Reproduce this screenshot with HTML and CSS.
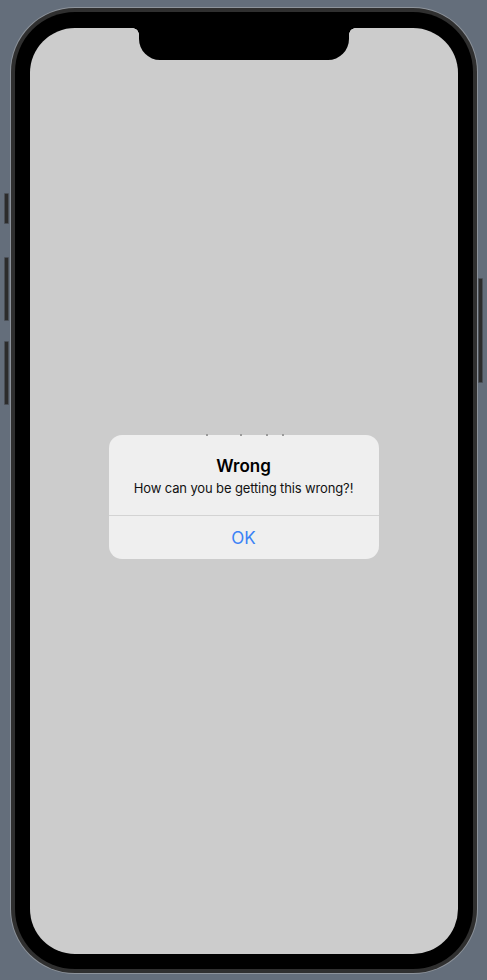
FILE: index.html
```html
<!DOCTYPE html>
<html lang="en">
<head>
<meta charset="utf-8">
<title>Alert</title>
<link rel="stylesheet" href="styles.css">
</head>
<body>
<div class="phone">
  <span class="btn btn-silent"></span>
  <span class="btn btn-vol-up"></span>
  <span class="btn btn-vol-down"></span>
  <span class="btn btn-power"></span>
  <div class="bezel">
    <div class="screen">
      <div class="notch"></div>
      <div class="alert">
        <span class="ghost g1"></span>
        <span class="ghost g2"></span>
        <span class="ghost g3"></span>
        <span class="ghost g4"></span>
        <div class="alert-body">
          <div class="alert-title">Wrong</div>
          <div class="alert-message">How can you be getting this wrong?!</div>
        </div>
        <div class="alert-action">OK</div>
      </div>
    </div>
  </div>
</div>
</body>
</html>
```

FILE: styles.css
```css
html, body {
  margin: 0;
  padding: 0;
}
body {
  width: 487px;
  height: 980px;
  background: #646e7b;
  display: flex;
  align-items: center;
  justify-content: center;
  font-family: Inter, "Noto Sans", "Liberation Sans", sans-serif;
}
.phone {
  position: relative;
  width: 466px;
  height: 965px;
  box-sizing: border-box;
  padding: 4px;
  border-radius: 64px;
  background: #2f2f2f;
  box-shadow: 0 0 0 1px #8d939b;
}
.btn {
  position: absolute;
  width: 5px;
  background: #2c2c2c;
  border: 1px solid #4a4f56;
  box-sizing: border-box;
  border-radius: 1px;
}
.btn-silent { left: -7px; top: 185px; height: 31px; }
.btn-vol-up { left: -7px; top: 249px; height: 64px; }
.btn-vol-down { left: -7px; top: 333px; height: 64px; }
.btn-power { right: -6px; top: 270px; height: 105px; width: 5px; }
.bezel {
  height: 100%;
  box-sizing: border-box;
  padding: 16px 15px 15px 15px;
  background: #000;
  border-radius: 60px;
}
.screen {
  position: relative;
  height: 100%;
  background: #cccccc;
  border-radius: 45px;
  display: flex;
  align-items: center;
  justify-content: center;
  overflow: hidden;
}
.notch {
  position: absolute;
  top: 0;
  left: 109px;
  width: 210px;
  height: 32px;
  background: #000;
  border-radius: 0 0 21px 21px;
}
.notch::before,
.notch::after {
  content: "";
  position: absolute;
  top: 0;
  width: 6px;
  height: 6px;
}
.notch::before {
  left: -6px;
  background: radial-gradient(circle at 0 100%, transparent 5.5px, #000 6px);
}
.notch::after {
  right: -6px;
  background: radial-gradient(circle at 100% 100%, transparent 5.5px, #000 6px);
}
.alert {
  position: relative;
  width: 270px;
  margin-top: 12px;
  background: #efefef;
  border-radius: 13px;
  text-align: center;
}
.ghost {
  position: absolute;
  top: -1px;
  width: 2px;
  height: 2px;
  background: #9a9a9a;
}
.g1 { left: 97px; }
.g2 { left: 131px; }
.g3 { left: 157px; }
.g4 { left: 173px; }
.alert-body {
  padding: 20px 16px 19px;
  border-bottom: 1px solid #d3d3d3;
}
.alert-title {
  font-size: 17px;
  line-height: 22px;
  font-weight: 600;
  color: #000;
}
.alert-message {
  margin-top: 3px;
  font-size: 13px;
  line-height: 16px;
  letter-spacing: -0.13px;
  color: #111;
}
.alert-action {
  height: 43px;
  line-height: 45px;
  font-size: 17px;
  color: #3a82f6;
  overflow: hidden;
}
```
